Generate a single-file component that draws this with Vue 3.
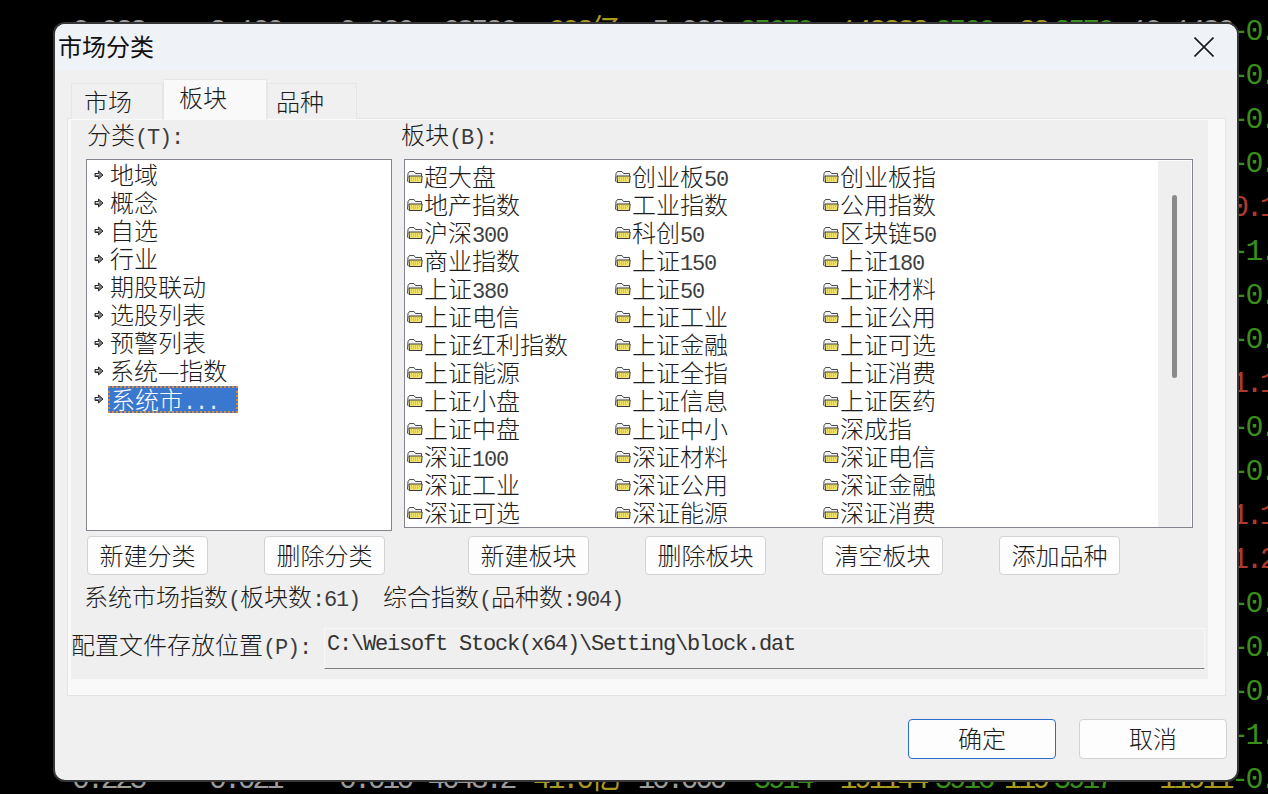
<script setup>
import { h } from 'vue';

const categories = ['地域', '概念', '自选', '行业', '期股联动', '选股列表', '预警列表', '系统—指数', '系统市...'];

const blocks = [
  '超大盘', '创业板50', '创业板指',
  '地产指数', '工业指数', '公用指数',
  '沪深300', '科创50', '区块链50',
  '商业指数', '上证150', '上证180',
  '上证380', '上证50', '上证材料',
  '上证电信', '上证工业', '上证公用',
  '上证红利指数', '上证金融', '上证可选',
  '上证能源', '上证全指', '上证消费',
  '上证小盘', '上证信息', '上证医药',
  '上证中盘', '上证中小', '深成指',
  '深证100', '深证材料', '深证电信',
  '深证工业', '深证公用', '深证金融',
  '深证可选', '深证能源', '深证消费',
];

// the quote table behind the dialog, only its edges stay visible
const topRow = [
  ['0.032', 'gray'], ['2.100', 'gray'], ['0.026', 'gray'], ['68526', 'gray'], ['603亿', 'yellow'], ['5.000', 'gray'],
  ['25670', 'green'], ['143382', 'yellow'], ['2566', 'green'], ['23', 'yellow'], ['2576', 'green'], ['10.1486', 'gray'], ['-0.012', 'green'],
];
const bottomRow = [
  ['0.225', 'gray'], ['0.021', 'gray'], ['0.010', 'gray'], ['4043.2', 'gray'], ['41.0亿', 'yellow'], ['10.000', 'gray'],
  ['5914', 'green'], ['191144', 'yellow'], ['5916', 'green'], ['119', 'yellow'], ['5917', 'green'], ['11911', 'yellow'], ['-0.021', 'green'],
];
const sideRows = [
  ['-0.012', 'green'], ['-0.031', 'green'], ['-0.045', 'green'], ['0.132', 'red'], ['-1.024', 'green'], ['-0.018', 'green'],
  ['-0.052', 'green'], ['1.108', 'red'], ['-0.033', 'green'], ['-0.027', 'green'], ['1.114', 'red'], ['1.215', 'red'],
  ['-0.014', 'green'], ['-0.036', 'green'], ['-0.049', 'green'], ['-1.011', 'green'],
];

// ascii runs are set in the mono face, half as wide as the chinese ones
const T = ({ s }) => s.split(/([\x20-\x7e]+)/).filter(Boolean).map((p) =>
  /^[\x20-\x7e]/.test(p) ? h('span', { class: 'lat' }, p) : p,
);
T.props = ['s'];
</script>

<template>
  <div class="screen">
    <div class="quotes">
      <div class="quote-row">
        <span v-for="(c, i) in topRow" :key="i" :class="c[1]">{{ c[0] }}</span>
      </div>
      <div v-for="(c, i) in sideRows" :key="i" class="quote-row">
        <span class="last" :class="c[1]">{{ c[0] }}</span>
      </div>
      <div class="quote-row">
        <span v-for="(c, i) in bottomRow" :key="i" :class="c[1]">{{ c[0] }}</span>
      </div>
    </div>

    <div class="dialog">
      <div class="titlebar">
        <span class="title">市场分类</span>
        <svg class="close" width="20" height="20" viewBox="0 0 20 20">
          <path d="M0.5 0.5L19.5 19.5M19.5 0.5L0.5 19.5" stroke="#1a1a1a" stroke-width="1.6" fill="none" />
        </svg>
      </div>

      <div class="tabs">
        <div class="tab tab1">市场</div>
        <div class="tab tab2">板块</div>
        <div class="tab tab3">品种</div>
      </div>

      <div class="panel">
        <div class="inner">
          <div class="panes">
            <div class="pane-left">
              <div class="label"><T s="分类(T):" /></div>
              <div class="list">
                <div v-for="(c, i) in categories" :key="c" class="cat">
                  <svg class="arrow" width="10" height="10" viewBox="0 0 10 10">
                    <path d="M1 3.5H4.5V1L9 5L4.5 9V6.5H1Z" :fill="i === 8 ? '#6f86a3' : '#7c7c7c'" stroke="#2a2a2a" stroke-width="1" />
                    <path d="M2 4.5H5" stroke="#e8e8e8" stroke-width="1" fill="none" />
                  </svg>
                  <span class="cat-text" :class="{ selected: i === 8 }"><T :s="c" /></span>
                </div>
              </div>
            </div>
            <div class="pane-right">
              <div class="label label-b"><T s="板块(B):" /></div>
              <div class="blocks">
                <div class="block-grid">
                  <div v-for="b in blocks" :key="b" class="block">
                    <svg class="folder" width="16" height="14" viewBox="0 0 16 14">
                      <path d="M1 3.5L2.5 1.5H7L8.5 3.5H14.5V12.5H2L0.5 11Z" fill="#f3f3f3" stroke="#4a4a4a" stroke-width="1" />
                      <path d="M2 6H15.2L14.5 12.5H2.5Z" fill="#efe26a" stroke="#3c3c3c" stroke-width="1" />
                      <path d="M4 8H13M4 10H12" stroke="#b8a93a" stroke-width="1" stroke-dasharray="1 1" />
                    </svg>
                    <span class="block-text"><T :s="b" /></span>
                  </div>
                </div>
                <div class="scrollbar"><div class="thumb"></div></div>
              </div>
            </div>
          </div>

          <div class="actions">
            <button class="btn">新建分类</button>
            <button class="btn">删除分类</button>
            <button class="btn second">新建板块</button>
            <button class="btn">删除板块</button>
            <button class="btn">清空板块</button>
            <button class="btn">添加品种</button>
          </div>

          <div class="status">
            <span class="status-left"><T s="系统市场指数(板块数:61)" /></span>
            <span><T s="综合指数(品种数:904)" /></span>
          </div>

          <div class="path">
            <label class="path-label"><T s="配置文件存放位置(P):" /></label>
            <input class="path-input" readonly value="C:\Weisoft Stock(x64)\Setting\block.dat" />
          </div>
        </div>
      </div>

      <div class="footer">
        <button class="btn wide primary">确定</button>
        <button class="btn wide">取消</button>
      </div>
    </div>
  </div>
</template>

<style scoped>
.screen {
  position: relative;
  width: 1268px;
  height: 794px;
  overflow: hidden;
  background: #000;
}

.quotes {
  padding-top: 10px;
  font-family: "Liberation Mono", "Noto Sans CJK SC", monospace;
  font-size: 30px;
  line-height: 44px;
  letter-spacing: -3.6px;
  white-space: nowrap;
}

.quote-row {
  display: grid;
  grid-template-columns: 144px 137px 130px 103px 103px 107px 87px 115px 66px 55px 64px 120px 38px;
  height: 44px;
  text-align: right;
}

.quote-row span:last-child {
  text-align: left;
}

.last {
  grid-column: 13;
}

.gray { color: #9c9c9c; }
.yellow { color: #a89a20; }
.green { color: #3a8f1a; }
.red { color: #b03a2e; }

.dialog {
  position: absolute;
  left: 53px;
  top: 22px;
  width: 1186px;
  height: 760px;
  box-sizing: border-box;
  border: 2px solid #363636;
  border-radius: 12px;
  background: #f0f0f0;
  overflow: hidden;
  display: flex;
  flex-direction: column;
  font-family: "Noto Sans CJK SC", sans-serif;
  font-size: 24px;
  font-weight: 300;
  color: #1c1c1c;
}

.titlebar {
  height: 46px;
  flex: none;
  display: flex;
  align-items: center;
  justify-content: space-between;
  padding: 0 23px 0 3px;
  background: #eff3f8;
}

.title {
  font-weight: 400;
  line-height: 42px;
  margin-bottom: 2px;
  color: #111;
}

.tabs {
  display: flex;
  align-items: flex-end;
  height: 40px;
  margin: 9px 0 0 16px;
  flex: none;
  position: relative;
  z-index: 1;
}

.tab {
  box-sizing: border-box;
  height: 36px;
  line-height: 34px;
  border: 1px solid #e6e6e6;
  border-bottom: none;
  background: #f0f0f0;
}

.tab1 {
  width: 92px;
  padding-left: 12px;
}

.tab2 {
  width: 104px;
  height: 41px;
  margin-bottom: -1px;
  line-height: 34px;
  padding-left: 15px;
  background: #f9f9f9;
}

.tab3 {
  width: 90px;
  padding-left: 8px;
}

.panel {
  flex: none;
  box-sizing: border-box;
  width: 1159px;
  height: 578px;
  margin: -1px 0 0 12px;
  padding: 1px 17px 16px 3px;
  border: 1px solid #e4e4e4;
  background: #f9f9f9;
}

.inner {
  height: 100%;
  background: #efefef;
  display: flex;
  flex-direction: column;
}

.panes {
  display: flex;
  gap: 12px;
  padding-left: 15px;
  flex: none;
  height: 411px;
}

.pane-left {
  width: 306px;
}

.pane-right {
  width: 789px;
}

.label {
  height: 39px;
  line-height: 27px;
  padding-left: 1px;
}

.label-b {
  margin-left: -4px;
}

.list {
  box-sizing: border-box;
  height: 372px;
  padding-top: 1px;
  border: 1px solid #85858f;
  background: #fff;
}

.cat {
  display: flex;
  align-items: center;
  height: 28px;
  padding-left: 7px;
}

.arrow {
  flex: none;
  margin-right: 5px;
}

.cat-text {
  box-sizing: border-box;
  padding: 0 1px;
  line-height: 27px;
  margin-bottom: 4px;
}

.cat-text.selected {
  width: 130px;
  margin: 0 0 0 -1px;
  padding: 0 1px;
  height: 27px;
  line-height: 21px;
  background: #3a78d0;
  color: #fff;
  border: 2px dotted #e8872e;
}

.blocks {
  box-sizing: border-box;
  height: 369px;
  border: 1px solid #85858f;
  background: #fff;
  display: flex;
  overflow: hidden;
}

.block-grid {
  width: 753px;
  padding: 3px 0 0 2px;
  display: grid;
  grid-template-columns: repeat(3, 208px);
  grid-auto-rows: 28px;
  box-sizing: border-box;
}

.block {
  display: flex;
  align-items: center;
  gap: 1px;
  white-space: nowrap;
}

.block-text {
  margin-bottom: 4px;
}

.folder {
  flex: none;
}

.scrollbar {
  width: 33px;
  margin: 1px 1px 0 0;
  background: #efefef;
}

.thumb {
  width: 5px;
  height: 183px;
  margin: 34px 0 0 14px;
  border-radius: 3px;
  background: #8b8b8b;
}

.actions {
  display: flex;
  gap: 56px;
  height: 39px;
  margin: 5px 0 0 16px;
  flex: none;
}

.btn {
  box-sizing: border-box;
  width: 121px;
  height: 39px;
  padding: 0 0 6px;
  border: 1px solid #d2d2d2;
  border-radius: 4px;
  background: #fdfdfd;
  font: inherit;
  color: inherit;
}

.btn.second {
  margin-left: 27px;
}

.status {
  display: flex;
  align-items: center;
  height: 45px;
  padding: 0 0 4px 13px;
  box-sizing: border-box;
  flex: none;
  white-space: nowrap;
}

.status-left {
  width: 299px;
}

.path {
  display: flex;
  align-items: flex-start;
  gap: 13px;
  margin-top: 8px;
  flex: none;
}

.path-label {
  width: 240px;
  margin-top: -2px;
  white-space: nowrap;
}

.path-input {
  box-sizing: border-box;
  width: 881px;
  height: 41px;
  padding: 0 0 8px 2px;
  border: 1px solid #f8f8f8;
  border-bottom-color: #808080;
  background: #efefef;
  outline: none;
  font-family: "Liberation Mono", monospace;
  font-size: 22px;
  letter-spacing: -1.2px;
  color: #333;
}

.footer {
  display: flex;
  justify-content: flex-end;
  gap: 23px;
  margin-top: 23px;
  padding-right: 10px;
}

.btn.wide {
  width: 148px;
  height: 40px;
  padding-bottom: 4px;
}

.btn.primary {
  border-color: #2a6fc9;
}
</style>

<style>
body {
  background: #000;
}

.lat {
  font-family: "Liberation Mono", monospace;
  font-size: 22px;
  letter-spacing: -1.2px;
  font-weight: 400;
  opacity: 0.85;
}
</style>
